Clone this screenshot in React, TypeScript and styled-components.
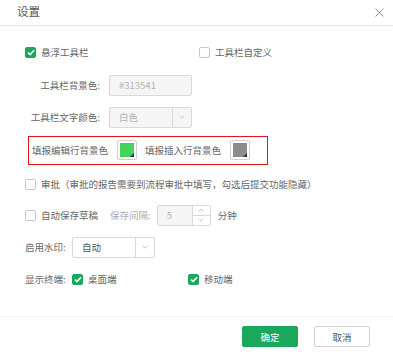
import React from "react";
import styled, { createGlobalStyle } from "styled-components";

const Global = createGlobalStyle`
  html, body { margin: 0; padding: 0; background: #fff; }
  body { font-family: "Noto Sans CJK SC", "Noto Sans", sans-serif; }
  * { box-sizing: border-box; }
`;

const Dialog = styled.div`
  width: 393px;
  height: 356px;
  display: flex;
  flex-direction: column;
  background: #fff;
  color: #666;
  font-size: 9.5px;
`;

const Header = styled.div`
  height: 26px;
  flex: none;
  display: flex;
  align-items: center;
  justify-content: space-between;
  padding: 0 9px 1px 17px;
  border-bottom: 1px solid #e6e6e6;
  box-shadow: 0 1px 2px rgba(0, 0, 0, 0.03);
`;

const Title = styled.div`
  font-size: 11.5px;
  color: #555;
  line-height: 1;
`;

const Close = styled.div`
  width: 9px;
  height: 9px;
  display: flex;
`;

const Body = styled.div`
  flex: 1;
  display: flex;
  flex-direction: column;
  padding: 10px 0 0 25px;
`;

const Row = styled.div<{ $h: number }>`
  height: ${(p) => p.$h}px;
  display: flex;
  align-items: center;
  white-space: nowrap;
`;

const Group = styled.div<{ $w?: number }>`
  display: flex;
  align-items: center;
  gap: 5px;
  ${(p) => (p.$w ? `width: ${p.$w}px;` : "")}
`;

const Box = styled.span<{ $on?: boolean }>`
  width: 11px;
  height: 11px;
  border-radius: 2px;
  display: inline-flex;
  align-items: center;
  justify-content: center;
  flex: none;
  background: ${(p) => (p.$on ? "#1aa85a" : "#fff")};
  border: 1px solid ${(p) => (p.$on ? "#1aa85a" : "#c8c8c8")};
`;

const Label = styled.span<{ $w: number; $right?: boolean }>`
  width: ${(p) => p.$w}px;
  text-align: ${(p) => (p.$right ? "right" : "left")};
  flex: none;
`;

const Field = styled.div<{ $w: number; $disabled?: boolean; $ml?: number }>`
  width: ${(p) => p.$w}px;
  height: 21px;
  margin-left: ${(p) => p.$ml ?? 0}px;
  border: 1px solid #d9d9d9;
  border-radius: 2px;
  background: ${(p) => (p.$disabled ? "#f5f5f5" : "#fff")};
  color: ${(p) => (p.$disabled ? "#b3b3b3" : "#555")};
  display: flex;
  align-items: stretch;
  flex: none;
`;

const FieldText = styled.span`
  flex: 1;
  display: flex;
  align-items: center;
  padding-left: 9px;
`;

const SideBtn = styled.span`
  width: 19px;
  border-left: 1px solid #d9d9d9;
  display: flex;
  align-items: center;
  justify-content: center;
`;

const SpinSide = styled.span`
  width: 18px;
  border-left: 1px solid #d9d9d9;
  display: flex;
  flex-direction: column;
  background: #fff;
`;

const SpinHalf = styled.span<{ $top?: boolean }>`
  flex: 1;
  display: flex;
  align-items: center;
  justify-content: center;
  ${(p) => (p.$top ? "border-bottom: 1px solid #d9d9d9;" : "")}
`;

const RedBox = styled.div`
  margin-left: 3px;
  width: 240px;
  height: 29px;
  border: 1.5px solid #e8141a;
  display: flex;
  align-items: center;
  padding-left: 3px;
`;

const Swatch = styled.span`
  width: 20px;
  height: 20px;
  border: 1px solid #cfcfcf;
  border-radius: 2px;
  padding: 2px;
  margin: 0 8px 0 9px;
  display: flex;
  flex: none;
  background: #fff;
`;

const SwatchFill = styled.span<{ $color: string }>`
  flex: 1;
  position: relative;
  background: ${(p) => p.$color};
  &::after {
    content: "";
    position: absolute;
    right: 0;
    bottom: 0;
    border-style: solid;
    border-width: 0 0 4px 4px;
    border-color: transparent transparent #333 transparent;
  }
`;

const Muted = styled.span<{ $ml: number }>`
  color: #ababab;
  margin-left: ${(p) => p.$ml}px;
  margin-right: 6px;
`;

const Unit = styled.span`
  margin-left: 7px;
`;

const Footer = styled.div`
  height: 40px;
  flex: none;
  display: flex;
  align-items: center;
  justify-content: flex-end;
  gap: 16px;
  padding-right: 23px;
  border-top: 1px solid #f2f2f2;
`;

const Button = styled.button<{ $primary?: boolean }>`
  width: 56px;
  height: 21px;
  border-radius: 2px;
  font-family: inherit;
  font-size: 9.5px;
  padding: 0;
  cursor: pointer;
  background: ${(p) => (p.$primary ? "#1aa85a" : "#fff")};
  color: ${(p) => (p.$primary ? "#fff" : "#555")};
  border: 1px solid ${(p) => (p.$primary ? "#1aa85a" : "#d0d0d0")};
`;

const Check = () => (
  <svg width="8" height="7" viewBox="0 0 8 7">
    <path d="M1 3.6 L3.1 5.6 L7 1.3" fill="none" stroke="#fff" strokeWidth="1.7" />
  </svg>
);

const Chevron = ({ up }: { up?: boolean }) => (
  <svg width="6" height="4" viewBox="0 0 6 4">
    <path d={up ? "M0.5 3.5 L3 1 L5.5 3.5" : "M0.5 0.8 L3 3.2 L5.5 0.8"} fill="none" stroke="#b8b8b8" strokeWidth="0.8" />
  </svg>
);

const CheckBox = ({ on }: { on?: boolean }) => <Box $on={on}>{on && <Check />}</Box>;

export default function App() {
  return (
    <Dialog>
      <Global />
      <Header>
        <Title>设置</Title>
        <Close>
          <svg width="9" height="9" viewBox="0 0 9 9">
            <path d="M0.5 0.5 L8.5 8.5 M8.5 0.5 L0.5 8.5" stroke="#8a8a8a" strokeWidth="0.9" />
          </svg>
        </Close>
      </Header>
      <Body>
        <Row $h={32}>
          <Group $w={174}>
            <CheckBox on />
            <span>悬浮工具栏</span>
          </Group>
          <Group>
            <CheckBox />
            <span>工具栏自定义</span>
          </Group>
        </Row>
        <Row $h={34}>
          <Label $w={75} $right>工具栏背景色:</Label>
          <Field $w={83} $ml={9} $disabled>
            <FieldText>#313541</FieldText>
          </Field>
        </Row>
        <Row $h={30}>
          <Label $w={75} $right>工具栏文字颜色:</Label>
          <Field $w={83} $ml={9} $disabled>
            <FieldText>白色</FieldText>
            <SideBtn>
              <Chevron />
            </SideBtn>
          </Field>
        </Row>
        <Row $h={36}>
          <RedBox>
            <span>填报编辑行背景色</span>
            <Swatch>
              <SwatchFill $color="#44d35b" />
            </Swatch>
            <span>填报插入行背景色</span>
            <Swatch>
              <SwatchFill $color="#8c8c8c" />
            </Swatch>
          </RedBox>
        </Row>
        <Row $h={32}>
          <Group>
            <CheckBox />
            <span>审批（审批的报告需要到流程审批中填写，勾选后提交功能隐藏）</span>
          </Group>
        </Row>
        <Row $h={30}>
          <Group>
            <CheckBox />
            <span>自动保存草稿</span>
          </Group>
          <Muted $ml={12}>保存间隔:</Muted>
          <Field $w={54} $disabled>
            <FieldText>5</FieldText>
            <SpinSide>
              <SpinHalf $top>
                <Chevron up />
              </SpinHalf>
              <SpinHalf>
                <Chevron />
              </SpinHalf>
            </SpinSide>
          </Field>
          <Unit>分钟</Unit>
        </Row>
        <Row $h={34}>
          <Label $w={47}>启用水印:</Label>
          <Field $w={83}>
            <FieldText>自动</FieldText>
            <SideBtn>
              <Chevron />
            </SideBtn>
          </Field>
        </Row>
        <Row $h={30}>
          <Label $w={47}>显示终端:</Label>
          <Group $w={116}>
            <CheckBox on />
            <span>桌面端</span>
          </Group>
          <Group>
            <CheckBox on />
            <span>移动端</span>
          </Group>
        </Row>
      </Body>
      <Footer>
        <Button $primary>确定</Button>
        <Button>取消</Button>
      </Footer>
    </Dialog>
  );
}
